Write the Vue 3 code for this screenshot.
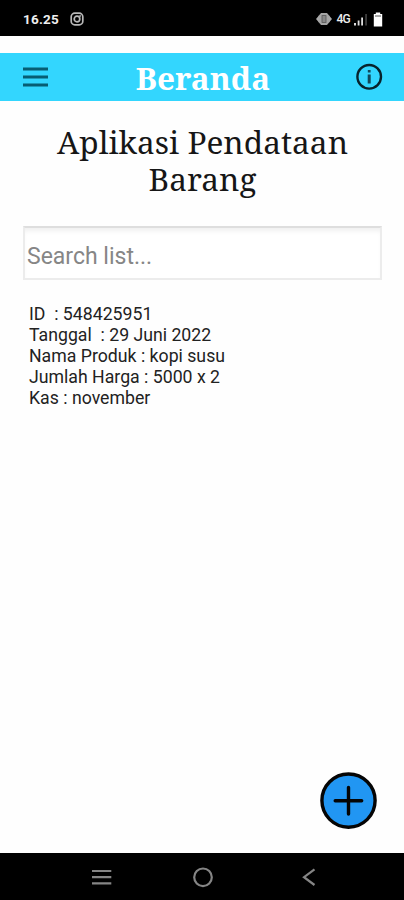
<template>
  <div class="screen">
    <div class="status-bar">
      <span class="clock">16.25</span>
      <svg class="insta" width="14" height="14" viewBox="0 0 14 14" fill="none" stroke="#b8b8b8">
        <rect x="1.2" y="1.2" width="11.6" height="11.6" rx="3.6" stroke-width="1.7" />
        <circle cx="7" cy="7" r="2.8" stroke-width="1.7" />
        <circle cx="10.2" cy="3.9" r="0.6" />
      </svg>
      <div class="status-icons">
        <svg width="16" height="14" viewBox="0 0 16 14">
          <path d="M0 7L3 3.5V10.5ZM16 7L13 3.5V10.5Z" fill="#aaa" />
          <path d="M5 1h6l2.5 3v6L11 13H5L2.5 10V4z" fill="#a5a5a5" />
          <rect x="6" y="3.6" width="4" height="6.8" fill="#888" stroke="#555" stroke-width="0.8" />
        </svg>
        <span class="network">4G</span>
        <svg class="signal" width="14" height="13" viewBox="0 0 14 13">
          <path d="M0 10h2v2.5H0zM3.7 7.5h1.8v5H3.7zM7.2 4.5h1.8v8H7.2z" fill="#ddd" />
          <path d="M11.4 1h1.3v11.5h-1.3z" fill="#555" />
        </svg>
        <svg class="battery" width="10" height="15" viewBox="0 0 10 15">
          <path d="M2.8 0.5h4.4v1.5H9.2v12.5H0.8V2H2.8z" fill="#fff" />
          <path d="M2 4h6" stroke="#555" stroke-width="1" />
        </svg>
      </div>
    </div>

    <header class="navbar">
      <button class="icon-btn" aria-label="Menu">
        <svg width="26" height="22" viewBox="0 0 26 22" stroke="#075d73" stroke-width="3">
          <path d="M0 3h25M0 11h25M0 19h25" />
        </svg>
      </button>
      <h1 class="navbar-title">Beranda</h1>
      <button class="icon-btn" aria-label="Info">
        <svg width="28" height="28" viewBox="0 0 28 28" fill="none" stroke="#07232c">
          <circle cx="14.2" cy="13.8" r="11.8" stroke-width="2.4" />
          <path d="M14.2 11.5V20.5" stroke="#12485a" stroke-width="3" />
          <path d="M14.2 7V9.5" stroke="#12485a" stroke-width="2.8" />
        </svg>
      </button>
    </header>

    <main class="content">
      <h2 class="title">Aplikasi Pendataan Barang</h2>
      <input v-model="searchQuery" class="search-input" placeholder="Search list..." />
      <ul class="list">
        <li v-for="item in filteredItems" :key="item.id">
          <div>ID&nbsp; : {{ item.id }}</div>
          <div>Tanggal&nbsp; : {{ item.tanggal }}</div>
          <div>Nama Produk : {{ item.nama }}</div>
          <div>Jumlah Harga : {{ item.harga }} x {{ item.jumlah }}</div>
          <div>Kas : {{ item.kas }}</div>
        </li>
      </ul>
      <button class="add-btn" aria-label="Tambah">
        <svg width="58" height="58" viewBox="0 0 58 58" stroke="#050505" stroke-width="3.4">
          <circle cx="29.5" cy="29.6" r="26.6" fill="#2196f3" />
          <path d="M29.5 16.5v26.5M16.2 29.8h26.5" stroke-linecap="round" />
        </svg>
      </button>
    </main>

    <nav class="bottom-nav">
      <svg width="20" height="18" viewBox="0 0 20 18" stroke="#858585" stroke-width="2.2">
        <path d="M0 2h19.3M0 8.2h19.3M0 14.4h19.3" />
      </svg>
      <svg class="home" width="22" height="22" viewBox="0 0 22 22" fill="none" stroke="#858585" stroke-width="2.2">
        <circle cx="11" cy="10.3" r="8.8" />
      </svg>
      <svg class="back" width="14" height="20" viewBox="0 0 14 20" fill="none" stroke="#858585" stroke-width="2.2">
        <path d="M12.5 1.3L2 9.2l10.5 7.8" />
      </svg>
    </nav>
  </div>
</template>

<script setup>
import { ref, computed } from 'vue'

const searchQuery = ref('')
const items = ref([
  {
    id: '548425951',
    tanggal: '29 Juni 2022',
    nama: 'kopi susu',
    harga: 5000,
    jumlah: 2,
    kas: 'november'
  }
])

const filteredItems = computed(() => {
  const query = searchQuery.value.trim().toLowerCase()
  return items.value.filter(i => i.nama.toLowerCase().includes(query))
})
</script>

<style>
body {
  margin: 0;
  background: #fff;
}
</style>

<style scoped>
.screen {
  display: flex;
  flex-direction: column;
  height: 900px;
  width: 404px;
  overflow: hidden;
  font-family: Roboto, sans-serif;
  background: #fefefe;
}
button {
  border: none;
  padding: 0;
  background: none;
}
svg {
  display: block;
}
.status-bar {
  box-sizing: border-box;
  display: flex;
  align-items: center;
  height: 36px;
  padding: 2px 21px 0 23px;
  background: #000;
  color: #eee;
}
.clock {
  font-size: 13.5px;
  font-weight: bold;
  letter-spacing: 0.2px;
}
.insta {
  margin-left: 11px;
}
.status-icons {
  display: flex;
  align-items: center;
  margin-left: auto;
}
.network {
  margin-left: 5px;
  font-size: 12px;
  font-weight: 500;
  letter-spacing: -0.8px;
}
.signal {
  margin-left: 4px;
}
.battery {
  margin-left: 5px;
}
.navbar {
  box-sizing: border-box;
  display: flex;
  align-items: center;
  justify-content: space-between;
  height: 48px;
  margin-top: 17px;
  padding: 0 21px 0 23px;
  background: #33d6fe;
}
.navbar-title {
  margin: 1px 0 0 2px;
  font-family: "Noto Serif", "DejaVu Serif", serif;
  font-size: 31.5px;
  line-height: 42px;
  color: #fff;
}
.content {
  display: flex;
  flex-direction: column;
  flex: 1;
  padding: 22px 22px 0 23px;
}
.title {
  margin: 0;
  font-family: "Noto Serif", "DejaVu Serif", serif;
  font-size: 31.6px;
  font-weight: normal;
  line-height: 37px;
  text-align: center;
  color: #161616;
}
.search-input {
  box-sizing: border-box;
  width: 359px;
  height: 54px;
  margin-top: 29px;
  padding: 7px 2px 0;
  border: 2px solid #ececec;
  border-top-color: #dedede;
  border-radius: 0;
  outline: none;
  background: #fff;
  box-shadow: inset 0 5px 5px -2px #f0f0f0;
  font-family: Roboto, sans-serif;
  font-size: 23px;
}
.search-input::placeholder {
  color: #868686;
  opacity: 1;
}
.list {
  margin: 24px 0 0;
  padding: 0 0 0 6px;
  list-style: none;
  font-size: 17.7px;
  line-height: 21.1px;
  color: #222;
}
.add-btn {
  align-self: flex-end;
  margin: auto 5px 24px 0;
}
.bottom-nav {
  box-sizing: border-box;
  display: flex;
  align-items: center;
  height: 47px;
  padding: 2px 0 0 92px;
  background: #000;
}
.home {
  margin-left: 79.5px;
}
.back {
  margin-left: 88.5px;
}
</style>
